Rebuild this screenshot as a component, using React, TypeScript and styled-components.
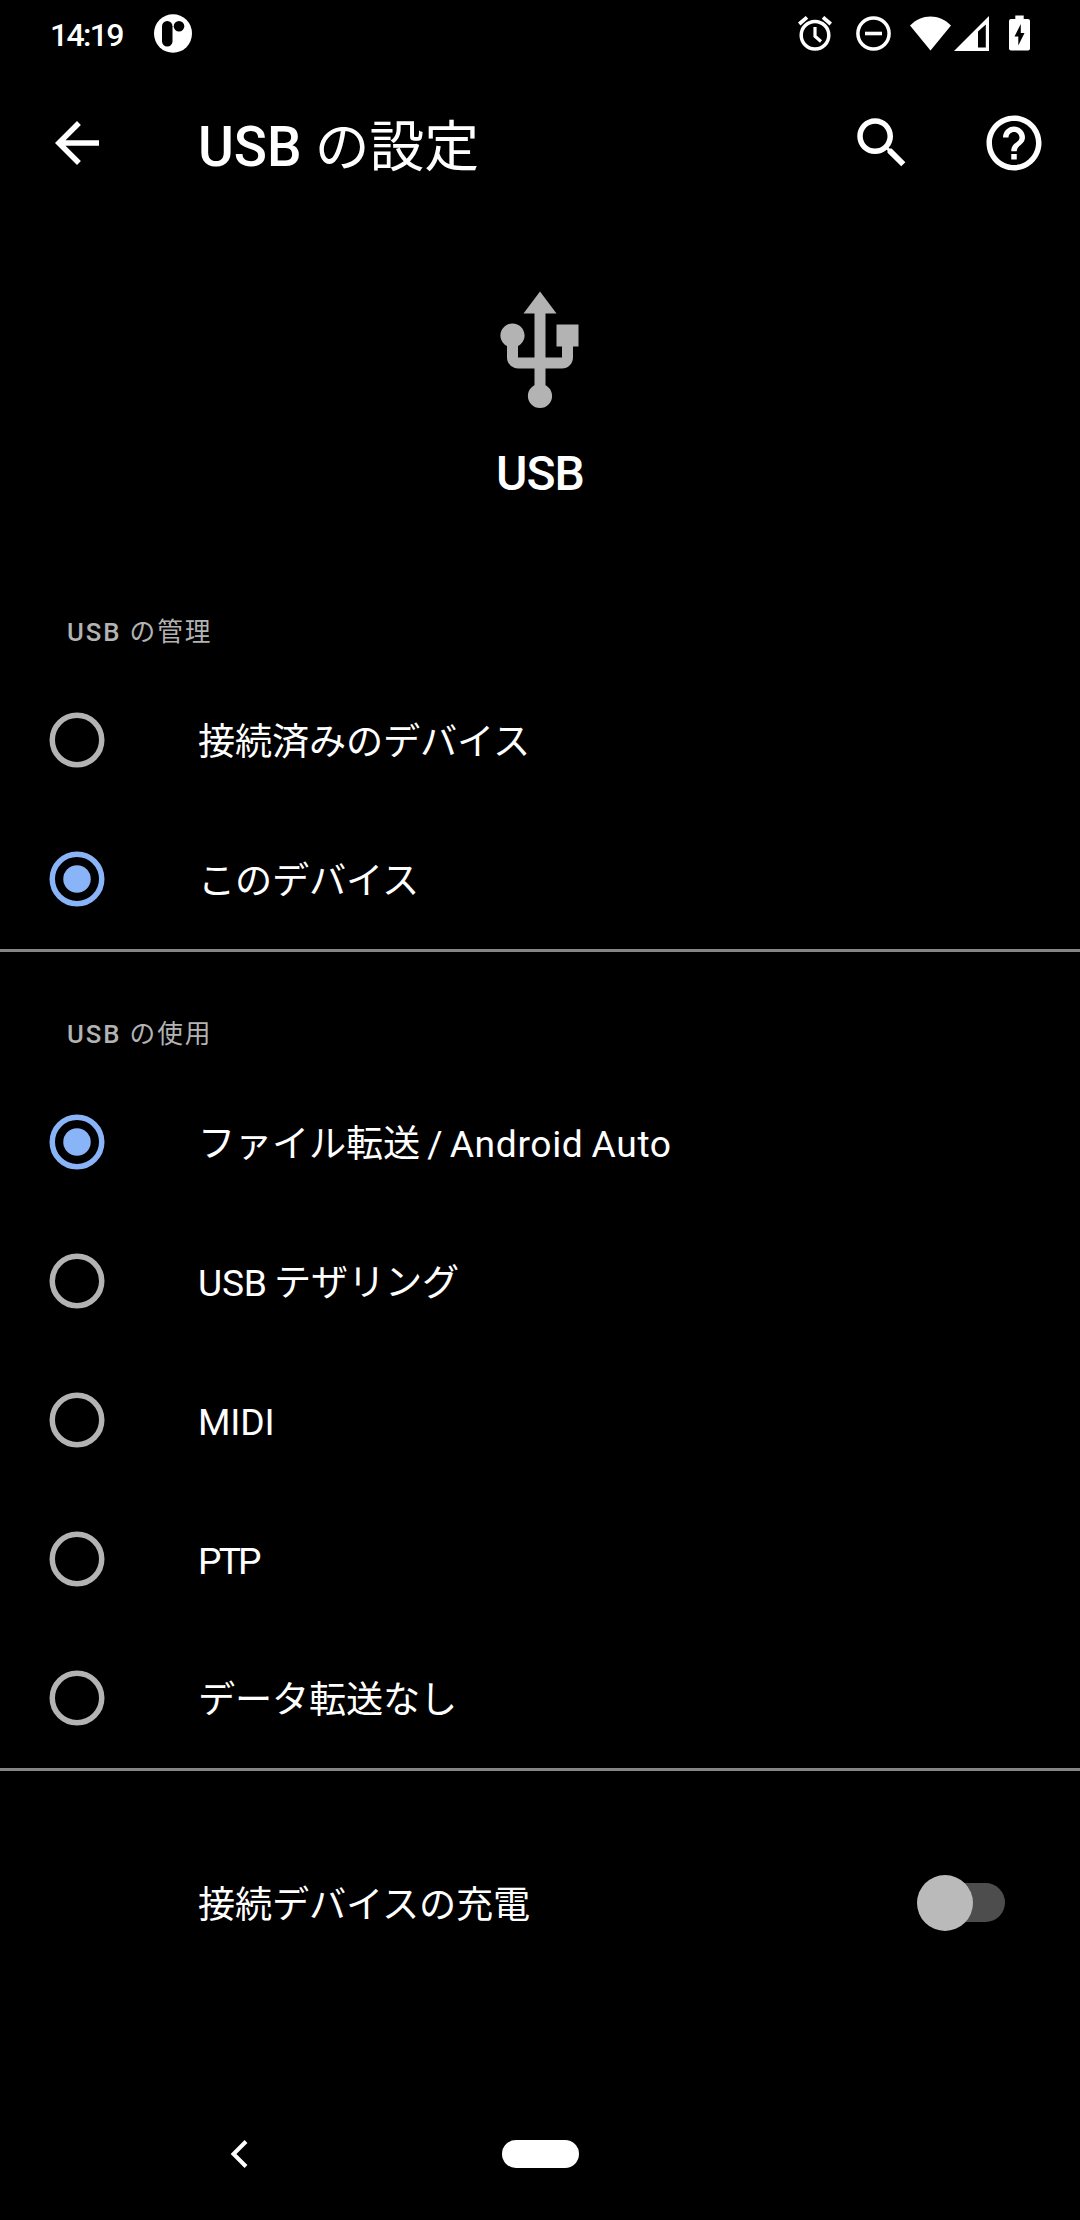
import React, { useState } from 'react';
import styled, { createGlobalStyle } from 'styled-components';

const GlobalStyle = createGlobalStyle`
  * { box-sizing: border-box; }
  body {
    margin: 0;
    background: #000;
    color: #fff;
    font-family: Roboto, "Noto Sans CJK JP", sans-serif;
  }
  svg { display: block; flex: none; }
`;

const Screen = styled.div`
  width: 1080px;
  height: 2220px;
  display: flex;
  flex-direction: column;
  background: #000;
  overflow: hidden;
`;

const StatusBar = styled.header`
  height: 66px;
  padding: 0 50px 0 50px;
  display: flex;
  align-items: center;
`;

const Clock = styled.time`
  width: 104px;
  padding-top: 4px;
  font-size: 32px;
  line-height: 40px;
  font-weight: 500;
  letter-spacing: -1.7px;
`;

const StatusIcons = styled.div`
  margin-left: auto;
  display: flex;
  align-items: center;
`;

const StatusIcon = styled.svg<{ $gap: number }>`
  margin-left: ${(p) => p.$gap}px;
`;

const AppBar = styled.div`
  height: 154px;
  padding: 0 33px 0 44px;
  display: flex;
  align-items: center;
`;

const IconButton = styled.button`
  border: 0;
  padding: 0;
  background: none;
  color: #fff;
  cursor: pointer;
`;

const Title = styled.h1`
  flex: 1;
  margin: 0 0 0 88px;
  padding-top: 7px;
  font-size: 54.8px;
  line-height: 80px;
  font-weight: 400;
  word-spacing: -0.5px;
  white-space: nowrap;
`;

const Medium = styled.span`
  font-weight: 500;
`;

const Actions = styled.div`
  display: flex;
  gap: 66px;
`;

const Hero = styled.section`
  height: 354px;
  padding-top: 66px;
  display: flex;
  flex-direction: column;
  align-items: center;
`;

const HeroLabel = styled.h2`
  margin: 27px 0 0;
  font-size: 48px;
  line-height: 58px;
  font-weight: 500;
  letter-spacing: -0.9px;
`;

const SectionHeader = styled.h3<{ $height: number }>`
  height: ${(p) => p.$height}px;
  margin: 0;
  padding: 0 67px 20px;
  display: flex;
  align-items: flex-end;
  font-size: 25.7px;
  line-height: 36px;
  font-weight: 400;
  letter-spacing: 1.9px;
  color: #b3b3b3;
  white-space: pre;
`;

const Row = styled.div`
  height: 139px;
  padding: 0 75px 0 44px;
  display: flex;
  align-items: center;
  cursor: pointer;
`;

const RowLabel = styled.span<{ $inset?: boolean }>`
  flex: 1;
  margin-left: ${(p) => (p.$inset ? 154 : 88)}px;
  padding-top: 4px;
  font-size: 37.2px;
  line-height: 54px;
  letter-spacing: -0.18px;
  word-spacing: -1.8px;
  white-space: nowrap;
`;

const Tracked = styled.span<{ $tracking: number }>`
  letter-spacing: ${(p) => p.$tracking}px;
`;

const Divider = styled.hr`
  width: 100%;
  height: 3px;
  margin: 1px 0 0;
  border: 0;
  background: #858585;
`;

const ChargeSection = styled.section`
  flex: 1;
  padding-top: 62px;
`;

const Track = styled.div`
  position: relative;
  width: 80px;
  height: 39px;
  border-radius: 20px;
  background: #4d4d4d;
`;

const Thumb = styled.div<{ $on: boolean }>`
  position: absolute;
  top: -8px;
  left: ${(p) => (p.$on ? 33 : -8)}px;
  width: 56px;
  height: 56px;
  border-radius: 50%;
  background: ${(p) => (p.$on ? '#8ab4f8' : '#bababa')};
`;

const NavBar = styled.nav`
  height: 132px;
  padding-left: 230px;
  display: flex;
  align-items: center;
`;

const HomePill = styled.div`
  width: 77px;
  height: 28px;
  margin-left: 254px;
  border-radius: 14px;
  background: #fff;
`;

const Radio = ({ checked }: { checked: boolean }) => {
  const color = checked ? '#8ab4f8' : '#b3b3b3';
  return (
    <svg width="66" height="66" viewBox="0 0 24 24">
      <circle cx="12" cy="12" r="9" fill="none" stroke={color} strokeWidth="2" />
      {checked && <circle cx="12" cy="12" r="5" fill={color} />}
    </svg>
  );
};

const MaterialIcon = ({ d, size = 66, color = '#fff' }: { d: string; size?: number; color?: string }) => (
  <svg width={size} height={size} viewBox="0 0 24 24" fill={color}>
    <path d={d} />
  </svg>
);

const ARROW_BACK = 'M20 11H7.83l5.59-5.59L12 4l-8 8 8 8 1.41-1.41L7.83 13H20v-2z';
const SEARCH =
  'M15.5 14h-.79l-.28-.27C15.41 12.59 16 11.11 16 9.5 16 5.91 13.09 3 9.5 3S3 5.91 3 9.5 5.91 16 9.5 16c1.61 0 3.09-.59 4.23-1.57l.27.28v.79l5 4.99L20.49 19l-4.99-5zm-6 0C7.01 14 5 11.99 5 9.5S7.01 5 9.5 5 14 7.01 14 9.5 11.99 14 9.5 14z';
const HELP =
  'M11 18h2v-2h-2v2zm1-16C6.48 2 2 6.48 2 12s4.48 10 10 10 10-4.48 10-10S17.52 2 12 2zm0 18c-4.41 0-8-3.59-8-8s3.59-8 8-8 8 3.59 8 8-3.59 8-8 8zm0-14c-2.21 0-4 1.79-4 4h2c0-1.1.9-2 2-2s2 .9 2 2c0 2-3 1.75-3 5h2c0-2.25 3-2.5 3-5 0-2.21-1.79-4-4-4z';
const USB =
  'M15 7v4h1v2h-3V5h2l-3-4-3 4h2v8H8v-2.07c.7-.37 1.2-1.08 1.2-1.93 0-1.21-.99-2.2-2.2-2.2-1.21 0-2.2.99-2.2 2.2 0 .85.5 1.56 1.2 1.93V13c0 1.11.89 2 2 2h3v3.05c-.71.37-1.2 1.1-1.2 1.95 0 1.22.99 2.2 2.2 2.2 1.21 0 2.2-.98 2.2-2.2 0-.85-.49-1.58-1.2-1.95V15h3c1.11 0 2-.89 2-2v-2h1V7h-4z';

const MODES: React.ReactNode[] = ['接続済みのデバイス', 'このデバイス'];
const USES: React.ReactNode[] = [
  <>ファイル転送 / <Tracked $tracking={0.65}>Android Auto</Tracked></>,
  <>USB テザリング</>,
  'MIDI',
  <Tracked $tracking={-2.8}>PTP</Tracked>,
  'データ転送なし',
];

export default function App() {
  const [mode, setMode] = useState(1);
  const [use, setUse] = useState(0);
  const [charging, setCharging] = useState(false);

  return (
    <Screen lang="ja">
      <GlobalStyle />
      <StatusBar>
        <Clock>14:19</Clock>
        <svg width="38" height="39" viewBox="0 0 38 39">
          <ellipse cx="19" cy="19.5" rx="19" ry="19.3" fill="#fff" />
          <rect x="8" y="7" width="10.5" height="25.5" rx="5.2" fill="#000" />
          <circle cx="25" cy="12.3" r="5.3" fill="#000" />
        </svg>
        <StatusIcons>
          <StatusIcon $gap={0} width="34" height="35" viewBox="0 0 34 35" fill="none" stroke="#fff">
            <circle cx="17" cy="19.3" r="13.8" strokeWidth="3.5" />
            <path d="M1.2 8L9 1.4M32.8 8L25 1.4" strokeWidth="3.8" />
            <path d="M17 11v9.3l6 5.2" strokeWidth="3.2" />
          </StatusIcon>
          <StatusIcon $gap={24} width="35" height="35" viewBox="0 0 35 35" fill="none" stroke="#fff">
            <circle cx="17.5" cy="17.5" r="15.6" strokeWidth="3.5" />
            <path d="M9 17.5h17" strokeWidth="3.6" />
          </StatusIcon>
          <StatusIcon $gap={19} width="41" height="35" viewBox="0 0 41 35" fill="#fff">
            <path d="M0 9.5C6 3.5 13 .5 20.5 .5S35 3.5 41 9.5L20.5 34.5z" />
          </StatusIcon>
          <StatusIcon $gap={3} width="35" height="35" viewBox="0 0 35 35" fill="#fff">
            <path fillRule="evenodd" d="M0 35L35 0V35zM24 15.5V31.5H31.8V8.5z" />
          </StatusIcon>
          <StatusIcon $gap={20} width="21" height="36" viewBox="0 0 21 36">
            <path d="M6.3 .5h8.4V4H19a2 2 0 0 1 2 2v27.5a2 2 0 0 1-2 2H2a2 2 0 0 1-2-2V6a2 2 0 0 1 2-2h4.3z" fill="#fff" />
            <path d="M11.8 9L5.5 21.5h3.8V30.5L15.5 18h-3.7z" fill="#000" />
          </StatusIcon>
        </StatusIcons>
      </StatusBar>

      <AppBar>
        <IconButton aria-label="戻る">
          <MaterialIcon d={ARROW_BACK} />
        </IconButton>
        <Title>
          <Medium>USB</Medium> の設定
        </Title>
        <Actions>
          <IconButton aria-label="検索">
            <MaterialIcon d={SEARCH} />
          </IconButton>
          <IconButton aria-label="ヘルプ">
            <MaterialIcon d={HELP} />
          </IconButton>
        </Actions>
      </AppBar>

      <Hero>
        <MaterialIcon d={USB} size={132} color="#b3b3b3" />
        <HeroLabel>USB</HeroLabel>
      </Hero>

      <section>
        <SectionHeader $height={96}>
          <Medium>USB</Medium> の管理
        </SectionHeader>
        {MODES.map((label, i) => (
          <Row key={i} onClick={() => setMode(i)}>
            <Radio checked={i === mode} />
            <RowLabel>{label}</RowLabel>
          </Row>
        ))}
        <Divider />
      </section>

      <section>
        <SectionHeader $height={120}>
          <Medium>USB</Medium> の使用
        </SectionHeader>
        {USES.map((label, i) => (
          <Row key={i} onClick={() => setUse(i)}>
            <Radio checked={i === use} />
            <RowLabel>{label}</RowLabel>
          </Row>
        ))}
        <Divider />
      </section>

      <ChargeSection>
        <Row onClick={() => setCharging(!charging)}>
          <RowLabel $inset>接続デバイスの充電</RowLabel>
          <Track>
            <Thumb $on={charging} />
          </Track>
        </Row>
      </ChargeSection>

      <NavBar>
        <svg width="18" height="28" viewBox="0 0 18 28" fill="none" stroke="#fff" strokeWidth="4">
          <path d="M16 1.5L3.5 14L16 26.5" />
        </svg>
        <HomePill />
      </NavBar>
    </Screen>
  );
}
